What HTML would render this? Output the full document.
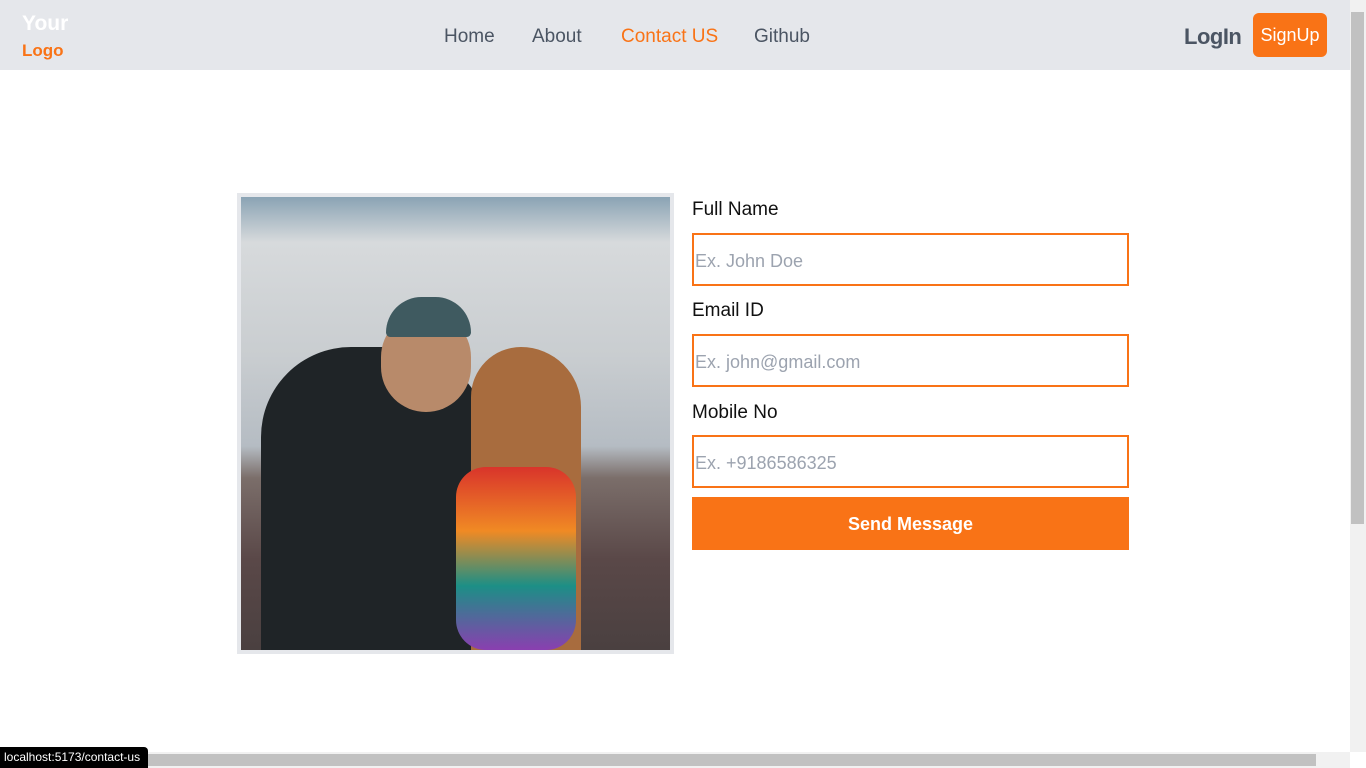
<!DOCTYPE html>
<html><head><style>
*{margin:0;padding:0;box-sizing:border-box}
body{width:1366px;height:768px;overflow:hidden;background:#fff;font-family:"Liberation Sans",sans-serif;position:relative}
.nav{position:absolute;left:0;top:0;width:1350px;height:70px;background:#e5e7eb}
.logo1{position:absolute;left:22px;top:12px;color:#fff;font-weight:900;font-size:21px}
.logo2{position:absolute;left:22px;top:41px;color:#f97316;font-weight:700;font-size:17px}
.links{position:absolute;top:26px;font-size:19px;color:#4b5563}
.login{position:absolute;left:1184px;top:24px;font-size:22px;color:#4b5563;font-weight:600;letter-spacing:-0.5px}
.signup{position:absolute;left:1253px;top:13px;width:74px;height:44px;background:#f97316;border-radius:6px;color:#fff;font-size:18px;text-align:center;line-height:45px}
.frame{position:absolute;left:237px;top:193px;width:437px;height:461px;background:#e5e7eb;padding:4px}
.photo{width:429px;height:453px;position:relative;overflow:hidden;background:linear-gradient(180deg,#8aa3b4 0%,#d7dadc 10%,#c9cdd0 35%,#b5bcc3 55%,#7b6e6a 62%,#5a4848 80%,#4a4040 100%)}
.photo div{position:absolute}
label{position:absolute;left:692px;font-size:19px;color:#111}
.inp{position:absolute;left:692px;width:437px;height:53px;border:2px solid #f97316;font-size:18px;color:#9ca3af;padding:16px 0 0 1px}
.btn{position:absolute;left:692px;top:497px;width:437px;height:53px;background:#f97316;color:#fff;font-size:18px;font-weight:700;text-align:center;line-height:55px}
</style></head><body>
<div class="nav">
<div class="logo1">Your</div><div class="logo2">Logo</div>
<div class="links" style="left:444px">Home</div>
<div class="links" style="left:532px">About</div>
<div class="links" style="left:621px;color:#f97316">Contact US</div>
<div class="links" style="left:754px">Github</div>
<div class="login">LogIn</div>
<div class="signup">SignUp</div>
</div>
<div class="frame"><div class="photo">
<div style="left:20px;top:150px;width:230px;height:303px;background:#1f2427;border-radius:90px 100px 0 0"></div>
<div style="left:140px;top:115px;width:90px;height:100px;background:#b88a6a;border-radius:45px"></div>
<div style="left:145px;top:100px;width:85px;height:40px;background:#3f5a60;border-radius:40px 40px 5px 5px"></div>
<div style="left:230px;top:150px;width:110px;height:303px;background:#a86c3e;border-radius:50px 60px 0 0"></div>
<div style="left:215px;top:270px;width:120px;height:183px;background:linear-gradient(180deg,#d9342b,#f08a24 35%,#1c8f86 65%,#8a3fb0);border-radius:30px"></div>
</div></div>
<label style="top:199px">Full Name</label>
<div class="inp" style="top:233px">Ex. John Doe</div>
<label style="top:300px">Email ID</label>
<div class="inp" style="top:334px">Ex. john@gmail.com</div>
<label style="top:402px">Mobile No</label>
<div class="inp" style="top:435px">Ex. +9186586325</div>
<div class="btn">Send Message</div>
<div style="position:absolute;left:1350px;top:0;width:16px;height:752px;background:#f1f1f1"><div style="position:absolute;left:1px;top:12px;width:13px;height:512px;background:#c1c1c1"></div></div>
<div style="position:absolute;left:0;top:752px;width:1350px;height:16px;background:#f1f1f1"><div style="position:absolute;left:0;top:2px;width:1316px;height:12px;background:#c1c1c1"></div></div>
<div style="position:absolute;left:0;top:747px;width:148px;height:21px;background:#000;color:#fff;font-size:12px;line-height:21px;padding-left:4px;border-radius:0 4px 0 0">localhost:5173/contact-us</div>
</body></html>
